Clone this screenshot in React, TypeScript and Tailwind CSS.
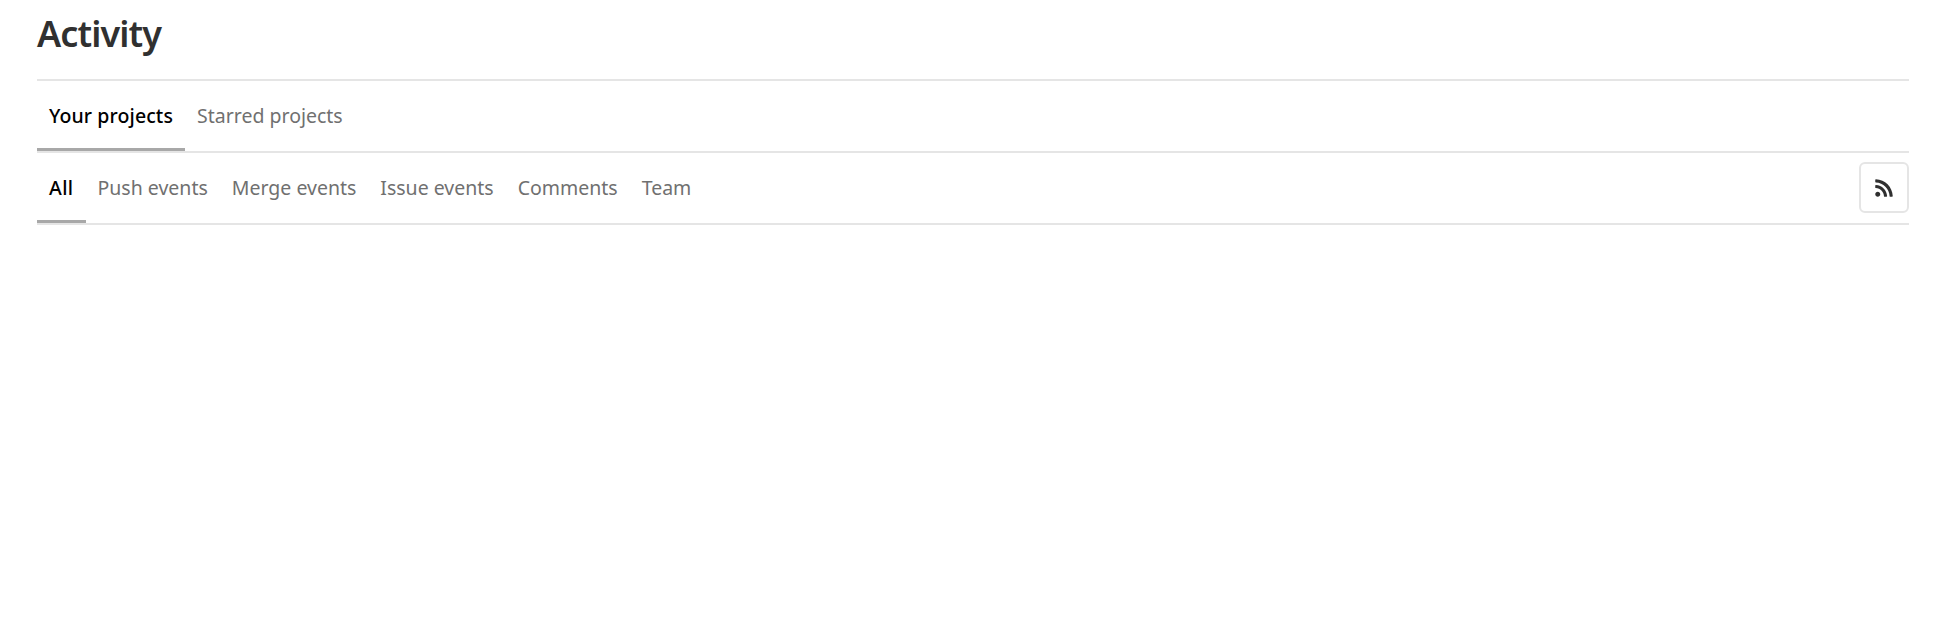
import { FaRss } from 'react-icons/fa'

const projectTabs = ['Your projects', 'Starred projects']
const eventTabs = ['All', 'Push events', 'Merge events', 'Issue events', 'Comments', 'Team']

function TabItem({ label, active, className = '' }: { label: string; active: boolean; className?: string }) {
  return (
    <a
      className={`flex h-[70px] items-center border-b-[3px] px-3 pt-[2px] text-[19.5px] ${active ? 'border-[#a8a8a8] font-medium text-black' : 'border-transparent text-[#707070]'} ${className}`}
      href="#"
    >
      {label}
    </a>
  )
}

export default function App() {
  return (
    <div className="min-h-[618px] bg-white pr-[30px] pl-[37px] font-['Noto_Sans',sans-serif]">
      <div className="flex h-[81px] items-start border-b-2 border-[#e5e5e5]">
        <h1 className="mt-[9px] text-[36px] leading-[50px] font-semibold tracking-[-0.9px] text-[#303030]">Activity</h1>
      </div>

      <div className="flex h-[72px] border-b-2 border-[#e5e5e5]">
        {projectTabs.map((tab, i) => (
          <TabItem key={tab} active={i === 0} className={i === 0 ? 'tracking-[0.1px]' : ''} label={tab} />
        ))}
      </div>

      <div className="flex h-[72px] items-start justify-between border-b-2 border-[#e5e5e5]">
        <div className="flex">
          {eventTabs.map((tab, i) => (
            <TabItem key={tab} active={i === 0} className={i === 0 ? 'tracking-[0.4px]' : ''} label={tab} />
          ))}
        </div>
        <button
          className="mt-[9px] flex h-[51px] w-[50px] items-center justify-center rounded-[6px] border-2 border-[#e5e5e5] text-[#303030]"
          type="button"
        >
          <FaRss className="h-[20px] w-[20px]" />
        </button>
      </div>
    </div>
  )
}
